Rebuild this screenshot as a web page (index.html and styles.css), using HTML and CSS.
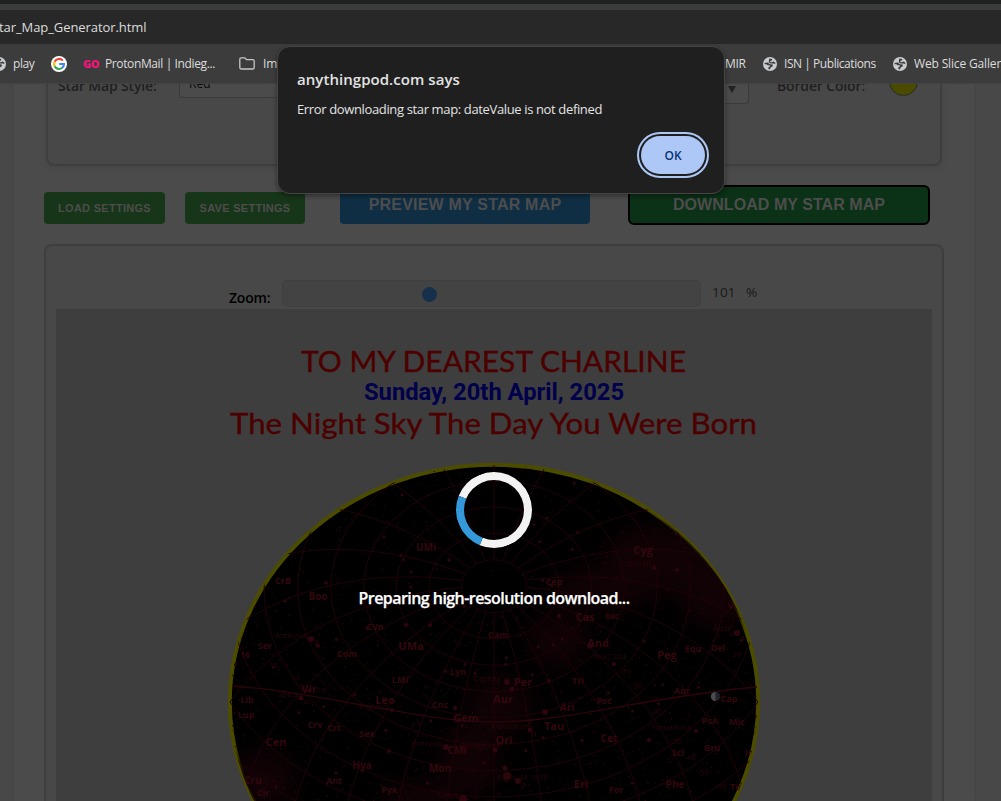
FILE: index.html
```html
<!DOCTYPE html>
<html lang="en">
<head>
<meta charset="utf-8">
<title>Star Map Generator</title>
<link rel="stylesheet" href="styles.css">
</head>
<body>
<svg class="defs" width="0" height="0">
  <symbol id="globe" viewBox="0 0 14 14">
    <circle cx="7" cy="7" r="7" fill="#c9cccf"/>
    <path d="M1.6 6 4.6 5.6 7 7.2 9.8 7.4 9.6 9.6 7.6 10.4 7 12.4 5.4 12 5.4 10.2 7.4 9 6.2 8.2 4.8 8.2 3.4 7.2 1.6 7.2ZM6.2 1.5 9.2 1.9 9 3.4 7.4 3.8 7.2 4.9 8.8 5.2 10.4 4.6 12.2 5.4 12.3 7 10.4 6.4 7.6 6.6 5.6 5.2 6 3.4Z" fill="#3c3c3c"/>
  </symbol>
</svg>

<header class="chrome">
  <div class="tabstrip"></div>
  <div class="address"><span class="url">Star_Map_Generator.html</span></div>
  <nav class="bookmarks">
    <svg class="bm-globe bm-first"><use href="#globe"/></svg><span class="bm t-play">play</span>
    <svg class="bm-google" viewBox="0 0 16 16"><circle cx="8" cy="8" r="8" fill="#fff"/><g fill="none" stroke-width="2.1"><path d="M11.8 4.6A5 5 0 0 0 3.6 5.7" stroke="#ea4335"/><path d="M3.7 5.5a5 5 0 0 0 0 5" stroke="#fbbc05"/><path d="M3.6 10.3a5 5 0 0 0 7.6 1.5" stroke="#34a853"/><path d="M11 12A5 5 0 0 0 13 8H8.2" stroke="#4285f4"/></g></svg>
    <span class="go">GO</span><span class="bm t-proton">ProtonMail | Indieg...</span>
    <svg class="bm-folder" viewBox="0 0 16 13"><path d="M.8 2.2q0-1.4 1.4-1.4h3.6l1.7 1.8h6.3q1.4 0 1.4 1.4v6.6q0 1.4-1.4 1.4H2.2q-1.4 0-1.4-1.4Z" fill="none" stroke="#c7c7c7" stroke-width="1.3"/></svg>
    <span class="bm t-im">Im</span>
    <span class="bm t-mir">MIR</span>
    <svg class="bm-globe"><use href="#globe"/></svg><span class="bm t-isn">ISN | Publications</span>
    <svg class="bm-globe"><use href="#globe"/></svg><span class="bm t-web">Web Slice Gallery</span>
  </nav>
</header>

<main class="page">
  <div class="sheet">
    <section class="options">
      <label class="opt-label">Star Map Style:</label>
      <div class="select select-style">Red</div>
      <div class="select select-mid"><i class="caret"></i></div>
      <label class="opt-label opt-border">Border Color:</label>
      <i class="swatch"></i>
    </section>
    <div class="actions">
      <div class="btn btn-load">LOAD SETTINGS</div>
      <div class="btn btn-save">SAVE SETTINGS</div>
      <div class="btn btn-preview">PREVIEW MY STAR MAP</div>
      <div class="btn btn-download">DOWNLOAD MY STAR MAP</div>
    </div>
    <section class="preview">
      <div class="zoom">
        <span class="zoom-label">Zoom:</span>
        <div class="track"><i class="thumb"></i></div>
        <span class="zoom-value">101</span><span class="zoom-unit">%</span>
      </div>
      <svg class="map" viewBox="56 309 876 492" width="876" height="492">
        <defs>
          <clipPath id="sky"><ellipse cx="494" cy="702" rx="264" ry="237"/></clipPath>
          <filter id="haze" x="-50%" y="-50%" width="200%" height="200%" color-interpolation-filters="sRGB"><feGaussianBlur stdDeviation="11"/></filter>
        </defs>
        <g class="titles">
          <text class="montserrat" x="301" y="372" textLength="385" lengthAdjust="spacingAndGlyphs">TO MY DEAREST CHARLINE</text>
          <text class="date" x="364" y="400" textLength="260" lengthAdjust="spacingAndGlyphs">Sunday, 20th April, 2025</text>
          <text class="montserrat" x="230" y="434" textLength="527" lengthAdjust="spacingAndGlyphs">The Night Sky The Day You Were Born</text>
        </g>
        <ellipse cx="494" cy="702" rx="264.2" ry="237.2" fill="#000" stroke="#4c4c00" stroke-width="4"/>
        <g clip-path="url(#sky)">
          <g fill="#100205" filter="url(#haze)">
            <ellipse cx="655" cy="560" rx="52" ry="34"/>
            <ellipse cx="715" cy="590" rx="36" ry="38"/>
            <ellipse cx="600" cy="590" rx="50" ry="22"/>
            <ellipse cx="558" cy="640" rx="30" ry="26"/>
            <ellipse cx="500" cy="705" rx="32" ry="28"/>
            <ellipse cx="470" cy="760" rx="30" ry="36"/>
            <ellipse cx="420" cy="800" rx="40" ry="18"/>
            <ellipse cx="262" cy="780" rx="34" ry="30"/>
          </g>
          <g id="grid" fill="none" stroke="#200308" stroke-width="1"></g>
          <path d="M232 686C320 692 420 722 494 722S650 696 757 687" fill="none" stroke="#2b050b" stroke-width="1.3"/>
          <g id="stars" fill="#2d050c"></g>
          <g id="labels" class="labels"></g>
          <circle cx="715.5" cy="696.5" r="4.6" fill="#20222c"/>
          <path d="M715.5 691.9a4.6 4.6 0 0 0 0 9.2Z" fill="#4b4b4d"/>
        </g>
      </svg>
    </section>
  </div>
</main>

<div class="loading">
  <div class="spinner"></div>
  <div class="loading-text">Preparing high-resolution download...</div>
</div>

<div class="dialog">
  <div class="dialog-title">anythingpod.com says</div>
  <div class="dialog-msg">Error downloading star map: dateValue is not defined</div>
  <div class="dialog-ok">OK</div>
</div>
<script src="script.js"></script>
</body>
</html>
```
FILE: styles.css
```css
* { box-sizing: border-box; }
body { margin: 0; width: 1001px; height: 801px; overflow: hidden; position: relative; background: #484848; font-family: "Open Sans", "Noto Sans", sans-serif; }
svg { display: block; flex: none; }
.defs { position: absolute; }

.chrome { height: 84px; background: #3c3c3c; color: #dcdcdc; }
.tabstrip { height: 10px; background: #3c3c3c; border-top: 4px solid #202222; }
.address { height: 34px; background: #282828; line-height: 34px; font-size: 13px; display: flex; }
.url { margin-left: -8px; letter-spacing: -.08px; white-space: nowrap; }
.bookmarks { height: 40px; display: flex; align-items: center; overflow: hidden; white-space: nowrap; font-size: 12px; border-bottom: 1px solid #424242; }
.bm { letter-spacing: -.2px; flex: none; }
.bm-globe { width: 14px; height: 14px; }
.bm-first { margin-left: -8px; }
.t-play { margin-left: 7px; width: 38px; letter-spacing: -.4px; }
.bm-google { width: 16px; height: 16px; }
.go { width: 22px; margin-left: 16px; color: #f5127b; font-weight: 800; font-size: 11px; letter-spacing: -.5px; flex: none; }
.t-proton { width: 134px; letter-spacing: -.38px; }
.bm-folder { width: 16px; height: 13px; }
.t-im { margin-left: 8px; width: 20px; }
.t-mir { margin-left: 442px; width: 38px; letter-spacing: -.3px; }
.t-isn { margin-left: 7px; width: 109px; letter-spacing: -.45px; }
.t-web { margin-left: 7px; width: 90px; letter-spacing: -.15px; }

.page { height: 717px; overflow: hidden; padding: 0 27px 0 14px; background: #484848; }
.sheet { height: 717px; background: #4b4b4b; box-shadow: 0 0 4px #454545; padding: 0 30px; }
.options { height: 82px; margin: 0 3px 0 2px; width: 896px; background: #484848; border: 2px solid #3e3e3e; border-top: 0; border-radius: 0 0 8px 8px; box-shadow: 0 2px 5px #464646; display: flex; }
.opt-label { width: 121px; margin: -8px 0 0 10px; font-size: 14px; line-height: 20px; font-weight: 600; letter-spacing: -.15px; color: #1f1f1f; white-space: nowrap; }
.select { border: 1px solid #3a3a3a; border-top: 0; border-radius: 0 0 4px 4px; background: #4b4b4b; }
.select-style { width: 170px; height: 14px; padding-left: 9px; font-size: 12px; line-height: 0; color: #0c0c0c; }
.select-mid { width: 160px; height: 20px; margin-left: 240px; padding: 2px 0 0 138px; }
.caret { display: block; width: 0; border: 4.5px solid transparent; border-top: 7px solid #222; border-bottom: 0; }
.opt-border { margin-left: 28px; width: 112px; }
.swatch { width: 29px; height: 29px; margin-top: -17px; border-radius: 50%; background: #4a4a00; border: 1px solid #292929; }

.actions { height: 78px; padding-top: 19px; display: flex; }
.btn { display: flex; align-items: center; justify-content: center; height: 32px; margin-top: 7px; border-radius: 4px; color: #4d4d4d; background: #173518; font: bold 11px "Liberation Sans", sans-serif; letter-spacing: .28px; white-space: nowrap; }
.btn-load { width: 121px; }
.btn-save { width: 120px; margin-left: 20px; }
.btn-preview { width: 250px; height: 40px; margin: -1px 0 0 35px; padding-top: 1px; background: #0f2e43; font-size: 16px; letter-spacing: .2px; }
.btn-download { width: 302px; height: 40px; margin: 0 0 0 38px; background: #0b3116; border: 2px solid #000; border-radius: 6px; font-size: 16px; letter-spacing: .05px; }

.preview { width: 900px; height: 600px; border: 2px solid #3e3e3e; border-radius: 8px; background: #484848; padding: 0 10px; }
.zoom { height: 63px; display: flex; padding: 34px 0 0 172px; font-size: 14px; color: #1a1a1a; }
.zoom-label { width: 54px; padding: 8px 0 0 1px; line-height: 20px; font-weight: 600; color: #000; letter-spacing: -.2px; }
.track { width: 419px; height: 27px; border: 1px solid #3f3f3f; border-radius: 5px; background: #434343; padding: 6px 0 0 139px; }
.thumb { display: block; width: 15px; height: 15px; border-radius: 50%; background: #16304c; }
.zoom-value { width: 34px; margin-left: 11px; line-height: 25px; font-size: 13.5px; letter-spacing: .2px; }
.zoom-unit { line-height: 25px; font-size: 13.5px; }
.map { background: #3e3e3e; }
.montserrat { font: 400 29px Lato, "Open Sans", sans-serif; fill: #4c0000; stroke: #4c0000; stroke-width: .35px; }
.date { font: bold 24px Roboto, sans-serif; fill: #00004c; }
.labels { font-family: "Open Sans", sans-serif; text-anchor: middle; fill: #33070e; }

.loading { position: absolute; left: 0; top: 472px; width: 988px; display: flex; flex-direction: column; align-items: center; }
.spinner { width: 76px; height: 76px; border-radius: 50%; border: 8px solid #f3f3f3; border-left-color: #3498db; transform: rotate(-23deg); }
.loading-text { margin-top: 39px; font-size: 16px; line-height: 22px; font-weight: 600; letter-spacing: -.55px; color: #fff; -webkit-text-stroke: .25px #fff; white-space: nowrap; }

.dialog { position: absolute; left: 277px; top: 46px; width: 448px; height: 148px; border: 1px solid #454545; border-radius: 13px; background: #1f1f1f; box-shadow: 0 2px 5px #0006; color: #e3e3e3; padding: 21px 15px 0 19px; display: flex; flex-direction: column; white-space: nowrap; }
.dialog-title { font-size: 15px; line-height: 22px; font-weight: 600; letter-spacing: .05px; }
.dialog-msg { font-size: 13px; line-height: 20px; margin-top: 9px; letter-spacing: -.36px; }
.dialog-ok { width: 64px; height: 38px; margin: 17px 4px 0 0; border-radius: 19px; background: #adc8f7; outline: 2px solid #adc8f7; outline-offset: 2px; color: #0b3272; font-size: 12px; font-weight: 600; display: flex; align-items: center; justify-content: center; align-self: flex-end; }
```
FILE: script.js
```js
const NS = "http://www.w3.org/2000/svg";
const CX = 494, CY = 702, RX = 264, RY = 237;
const RAD = Math.PI / 180;
const LAT = 46 * RAD;

function add(parent, tag, attrs, text) {
  const el = document.createElementNS(NS, tag);
  for (const k in attrs) el.setAttribute(k, attrs[k]);
  if (text) el.textContent = text;
  parent.appendChild(el);
}

// Equidistant all-sky projection, north up.
function project(hour, dec) {
  const h = hour * RAD, d = dec * RAD;
  const n = Math.sin(d) * Math.cos(LAT) - Math.cos(d) * Math.cos(h) * Math.sin(LAT);
  const e = Math.cos(d) * Math.sin(h);
  const alt = Math.sin(d) * Math.sin(LAT) + Math.cos(d) * Math.cos(h) * Math.cos(LAT);
  const r = Math.acos(alt) / (Math.PI / 2), m = Math.hypot(n, e) || 1;
  return r > 1.15 ? null : [CX + RX * r * e / m, CY - RY * r * n / m];
}

function line(points) {
  let d = "", pen = false;
  for (const p of points) {
    if (!p) { pen = false; continue; }
    d += (pen ? "L" : "M") + p[0].toFixed(1) + " " + p[1].toFixed(1);
    pen = true;
  }
  add(document.getElementById("grid"), "path", { d });
}

for (let dec = -40; dec <= 80; dec += 10) {
  const pts = [];
  for (let h = -180; h <= 180; h += 3) pts.push(project(h, dec));
  line(pts);
}
for (let h = 0; h < 360; h += 15) {
  const pts = [];
  for (let dec = -60; dec <= 80; dec += 2) pts.push(project(h, dec));
  line(pts);
}

let seed = 42;
function rnd() { seed = (seed * 16807) % 2147483647; return seed / 2147483647; }
const stars = document.getElementById("stars");
for (let i = 0; i < 1900; i++) {
  const x = 228 + rnd() * 532, y = 465 + rnd() * 336;
  if (y < 620 && rnd() < .45) continue;
  const r = rnd() < .04 ? 1.5 : .45 + rnd() * .35;
  add(stars, "circle", { cx: x.toFixed(1), cy: y.toFixed(1), r: r.toFixed(2) });
}
[[311,639,3],[318,646,2],[301,698,2.5],[392,710,2],[446,747,3],[463,799,4],[455,708,2],[389,751,2],[507,682,3],[512,689,2.5],[545,712,3],[530,730,2.5],[507,776,4],[518,781,3],[495,750,2.5],[505,768,2.5],[654,568,2],[677,570,2],[676,534,1.5],[737,633,3],[696,731,2],[649,740,2],[614,664,2],[549,681,2],[402,495,1.5],[384,537,1.5],[449,560,1.8],[326,583,1.8],[285,601,1.8],[430,625,2],[406,625,2],[559,616,2],[590,646,2.5]]
  .forEach(([cx, cy, r]) => add(stars, "circle", { cx, cy, r }));

const labels = document.getElementById("labels");
[["UMi",426,551,10],["CrB",283,584,9],["Boo",318,600,10],["CVn",375,630,9],["Cyg",643,554,11],["Cep",554,585,9],["Cas",585,621,11],["Lac",612,619,8],
["Ser",265,649,9],["16",245,658,8],["Com",347,657,9],["UMa",411,650,11],["LMi",400,683,9],["Lyn",458,675,9],["Cam",498,638,9],["Vir",309,693,11],["Lib",247,703,9],["Lup",246,718,9],["Leo",385,704,11],["Cnc",440,708,9],["Gem",466,722,11],["Crv",315,728,9],["Crt",334,731,9],["Sex",367,737,9],["Cen",276,746,11],["CMi",457,754,10],["Hya",362,769,10],["Mon",440,772,10],["Ant",334,784,9],["Pyx",389,793,9],["Cru",253,784,10],["Cir",263,796,9],
["And",598,647,11],["Peg",667,659,11],["Equ",693,652,9],["Del",718,651,9],["Tri",578,684,9],["Per",523,686,11],["Aqr",682,694,9],["Psc",604,704,9],["Cap",729,702,9],["Aur",503,703,11],["Ari",567,711,10],["Tau",554,730,11],["Ori",504,744,11],["Cet",609,742,10],["PsA",710,724,9],["Mic",737,725,9],["Gru",712,751,9],["Scl",678,756,9],["Ind",752,756,9],["Phe",675,788,10],["Eri",581,788,11],["For",616,793,9],["Tuc",738,790,9],["Vul",735,609,9]]
  .forEach(([t, x, y, s]) => add(labels, "text", { x, y, "font-size": s, "font-weight": 700 }, t));
[["Arcturus",291,638],["Deneb",639,566],["Spica",288,697],["Regulus",374,709],["Procyon",427,746],["Sirius",448,798],["Capella",487,681],["Altair",723,631],["NGC 224",610,659],["Fomalhaut",672,730],["Aldebaran",510,729],["Betelgeuse",480,748],["Rigel",506,780],["M 1976",534,780],["α",316,644],["α",306,704],["α",742,640],["α",534,736],["β",523,788],["15",274,668],["14",295,681],["13",321,693],["00",626,674],["30",638,688],["-10",652,702],["-20",656,714],["-30",676,744],["-40",690,760],["-50",703,775],["-60",721,789],["20",737,657]]
  .forEach(([t, x, y]) => add(labels, "text", { x, y, "font-size": 8, opacity: .85 }, t));
```
